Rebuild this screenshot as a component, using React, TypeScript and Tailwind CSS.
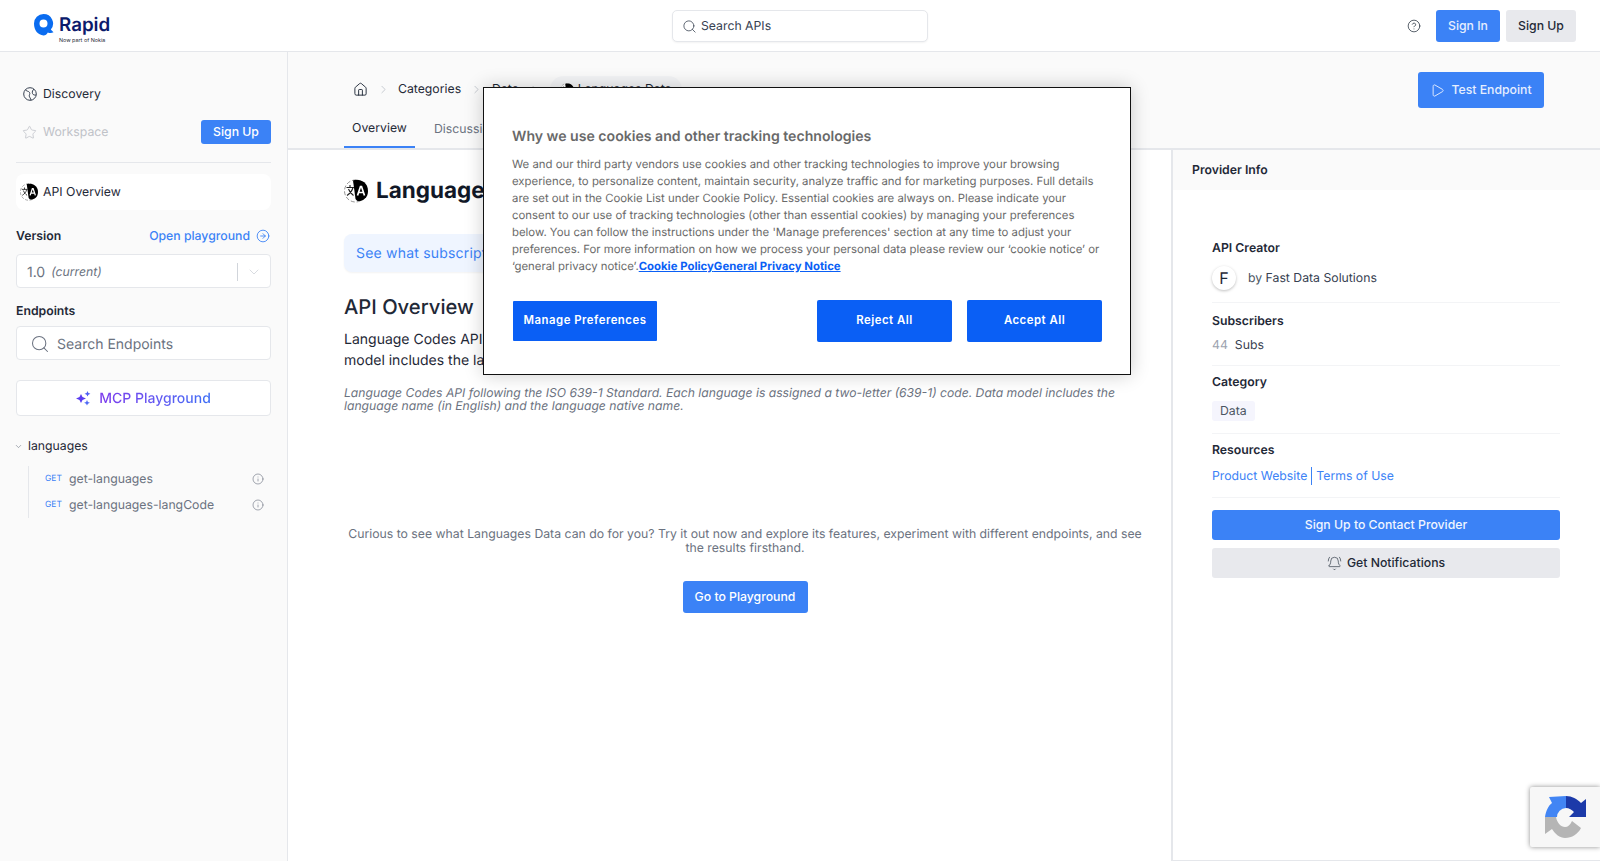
import { BellRing, ChevronDown, ChevronRight, CircleArrowRight, CircleHelp, House, Info, Play, Search, Star } from "lucide-react";
import { FC, ReactNode } from "react";

const LangIcon: FC<{ size: number }> = ({ size }) => (
  <svg width={size} height={size} viewBox="0 0 24 24" className="flex-shrink-0">
    <circle cx="11.500" cy="12" r="11" fill="#fff" stroke="#777" strokeWidth="0.8" strokeDasharray="4 2" />
    <path d="M9 1.500C14 -.5 24 2 24 12c0 8-7 11-11 9.800L11.500 20z" fill="#000" />
    <path d="M13.500 16.500l3-9h1l3 9M14.700 13.500h4.600" stroke="#fff" strokeWidth="1.700" fill="none" />
    <path d="M2.500 8.500h7.500M6 6v2.500M9 8.500c-1 4-3 6-6 8M4.500 10c1 3 3 5 5 6.500" stroke="#222" strokeWidth="1.100" fill="none" />
  </svg>
);

const DiscoveryIcon = () => (
  <svg width="14" height="14" viewBox="0 0 14 14" fill="none" stroke="#374151" strokeWidth="1" className="flex-shrink-0">
    <circle cx="7" cy="7" r="6.300" />
    <path d="M2.500 2.600c.8 2 3 1.200 4 2.800s-.6 2.300-.2 3.800 1.500 2.200 1.700 4.200M11 2c-1.200 1.200-2.200 2.600-1.500 4.500s2.500 1.500 3.700 1.500" />
  </svg>
);

const SparkIcon = () => (
  <svg width="15" height="15" viewBox="0 0 15 15" className="flex-shrink-0">
    <path d="M5 3l1.500 3L10 7.500 6.500 9 5 12 3.500 9 0 7.500 3.500 6z" fill="#5b3df0" />
    <path d="M11.500 0l.9 1.900 2 .9-2 .9-.9 1.900-.9-1.900-2-.9 2-.9z" fill="#4f5ff5" />
    <path d="M11 9l.9 1.900 2 .9-2 .9-.9 1.900-.9-1.900-2-.9 2-.9z" fill="#4f6af5" />
  </svg>
);

const RapidLogo = () => (
  <div className="flex w-[100px] flex-shrink-0 items-start">
    <svg width="20" height="22" viewBox="0 0 20 22" className="mt-[14px] flex-shrink-0">
      <path
        d="M9.500 0a9.500 9.500 0 0 1 7.300 15.600l2.700 2.600c-1.800 1-3.900 1-5.700.2-.9 2-2.700 3.100-4.300 3C4 21 0 16.500 0 9.500A9.500 9.500 0 0 1 9.500 0zm0 5.500a4 4 0 1 0 0 8 4 4 0 0 0 0-8z"
        fill="#0a6cf0"
        fillRule="evenodd"
      />
    </svg>
    <div className="ml-[5px] flex flex-col">
      <span className="mt-[11px] text-[18.750px] font-semibold leading-[28px] text-[#0b1a6b]">Rapid</span>
      <span className="-mt-[1px] text-[5.400px] leading-[7px] text-[#1f2937]">Now part of Nokia</span>
    </div>
  </div>
);

const Section: FC<{ title: string; children: ReactNode; pt: string }> = ({ title, children, pt }) => (
  <div className={`border-b border-[#f3f4f6] ${pt}`}>
    <p className="text-[12.250px] font-semibold leading-[16px] text-[#1f2937]">{title}</p>
    {children}
  </div>
);

const Endpoint: FC<{ name: string }> = ({ name }) => (
  <div className="flex h-[26px] items-center pl-[16px] pr-[7px]">
    <span className="w-[24px] text-[8.500px] text-[#3b82f6]">GET</span>
    <span className="flex-1 text-[12.250px] text-[#6b7280]">{name}</span>
    <Info size={12} strokeWidth={1.25} className="text-[#6b7280]" />
  </div>
);

const Sidebar = () => (
  <aside className="flex w-[288px] flex-shrink-0 flex-col border-r border-[#e5e7eb] bg-[#fafafa] px-[16px] pt-[30px]">
    <div className="flex h-[24px] items-center gap-[6px] pl-[7px] text-[12.250px] text-[#1f2937]">
      <DiscoveryIcon />
      Discovery
    </div>
    <div className="mt-[14px] flex h-[24px] items-center gap-[6px] pl-[6px] text-[12.250px] text-[#bfc2c8]">
      <Star size={15} strokeWidth={1.25} />
      <span className="flex-1">Workspace</span>
      <button type="button" className="h-[24px] w-[70px] rounded-[3px] bg-[#3b82f6] text-[12.250px] font-medium text-white">
        Sign Up
      </button>
    </div>
    <div className="mt-[18px] border-t border-[#e5e7eb]" />
    <div className="mt-[11px] flex h-[36px] items-center gap-[5px] rounded-[8px] bg-white pl-[4px] text-[12.250px] text-[#1f2937]">
      <LangIcon size={18} />
      API Overview
    </div>
    <div className="mt-[17px] flex h-[18px] items-center justify-between">
      <span className="text-[12.250px] font-semibold text-[#1f2937]">Version</span>
      <span className="flex items-center gap-[6px] pr-[1px] text-[12.250px] font-medium text-[#3b82f6]">
        Open playground
        <CircleArrowRight size={14} strokeWidth={1.5} />
      </span>
    </div>
    <div className="mt-[9px] flex h-[34px] items-center rounded-[4px] border border-[#e5e7eb] bg-white pl-[10px] pt-[2px] text-[#6b7280]">
      <span className="text-[14px]">1.0</span>
      <span className="ml-[6px] flex-1 text-[12.250px] italic">(current)</span>
      <span className="h-[18px] border-l border-[#d1d5db]" />
      <ChevronDown size={16} strokeWidth={1.25} className="mx-[8px] text-[#d1d5db]" />
    </div>
    <p className="mt-[14px] text-[12.250px] font-semibold leading-[18px] text-[#1f2937]">Endpoints</p>
    <div className="mt-[6px] flex h-[34px] items-center gap-[7px] rounded-[4px] border border-[#e5e7eb] bg-white pl-[13px] pt-[2px] text-[14px] text-[#6b7280]">
      <Search size={20} strokeWidth={1.25} />
      Search Endpoints
    </div>
    <div className="mt-[20px] flex h-[36px] items-center justify-center gap-[8px] rounded-[4px] border border-[#e5e7eb] bg-white">
      <SparkIcon />
      <span className="bg-gradient-to-r from-[#7c3aed] to-[#3b6ef6] bg-clip-text text-[14px] font-medium text-transparent">
        MCP Playground
      </span>
    </div>
    <div className="-ml-[2px] mt-[21px] flex h-[18px] items-center gap-[5px] text-[12.250px] text-[#1f2937]">
      <ChevronDown size={9} strokeWidth={1.5} className="text-[#6b7280]" />
      languages
    </div>
    <div className="ml-[12px] mt-[11px] border-l border-[#e5e7eb]">
      <Endpoint name="get-languages" />
      <Endpoint name="get-languages-langCode" />
    </div>
  </aside>
);

const PageHead = () => (
  <div className="flex h-[98px] flex-shrink-0 justify-between border-b-2 border-[#e5e7eb] bg-[#fafafa] pl-[56px] pr-[56px]">
    <div className="flex flex-col">
      <div className="mt-[24px] flex h-[28px] items-center pl-[9px] text-[12.250px] text-[#1f2937]">
        <House size={15} strokeWidth={1.5} />
        <ChevronRight size={13} strokeWidth={1} className="mx-[8.500px] text-[#9ca3af]" />
        <span>Categories</span>
        <ChevronRight size={13} strokeWidth={1} className="mx-[9px] text-[#9ca3af]" />
        <span>Data</span>
        <ChevronRight size={13} strokeWidth={1} className="mx-[9px] text-[#9ca3af]" />
        <span className="flex items-center gap-[4px] rounded-full bg-[#f3f4f6] px-[10px] py-[4px]">
          <LangIcon size={14} />
          Languages Data
        </span>
      </div>
      <div className="mt-[8px] flex h-[38px] items-stretch text-[12.250px]">
        <span className="flex w-[71px] items-center justify-center border-b-[2px] border-[#3b82f6] text-[#1f2937]">Overview</span>
        <span className="ml-[19px] flex items-center pb-[1px] text-[#6b7280]">Discussions</span>
      </div>
    </div>
    <button
      type="button"
      className="mt-[20px] flex h-[36px] w-[126px] items-center justify-center gap-[6px] rounded-[3px] bg-[#3b82f6] text-[12.250px] font-medium text-[#e6eefe]"
    >
      <Play size={15} strokeWidth={1.5} />
      Test Endpoint
    </button>
  </div>
);

const Overview = () => (
  <div className="w-[883px] flex-shrink-0 pl-[56px] pr-[25px] pt-[27px]">
    <div className="flex h-[28px] items-center gap-[8px]">
      <LangIcon size={24} />
      <h1 className="text-[22.500px] font-bold text-[#111827]">Languages Data</h1>
    </div>
    <div className="mt-[29px] flex h-[38px] w-fit items-center rounded-[8px] bg-[#eff5ff] px-[12px] text-[14px] tracking-[0.2px] text-[#3b82f6] shadow-[0_1px_2px_rgba(0,0,0,0.05)]">
      See what subscription plans are available for this API
    </div>
    <h2 className="mt-[21px] text-[20.200px] font-medium leading-[28px] text-[#1f2937]">API Overview</h2>
    <p className="mt-[8px] w-[770px] text-[14px] leading-[21px] text-[#1f2937]">
      Language Codes API following the ISO 639-1 Standard. Each language is assigned a two-letter (639-1) code. Data
      model includes the language name (in English) and the language native name.
    </p>
    <p className="mt-[15px] text-[12.170px] italic leading-[13px] text-[#6b7280]">
      Language Codes API following the ISO 639-1 Standard. Each language is assigned a two-letter (639-1) code. Data model includes the
      language name (in English) and the language native name.
    </p>
    <p className="mt-[115px] text-center text-[12.250px] leading-[14px] text-[#6b7280]">
      Curious to see what Languages Data can do for you? Try it out now and explore its features, experiment with different endpoints, and see
      the results firsthand.
    </p>
    <div className="mt-[26px] flex justify-center">
      <button type="button" className="h-[32px] w-[125px] rounded-[3px] bg-[#3b82f6] text-[12.250px] font-medium text-white">
        Go to Playground
      </button>
    </div>
  </div>
);

const ProviderInfo = () => (
  <div className="flex-1 border-b border-l-2 border-[#e5e7eb]">
    <div className="flex h-[40px] items-center bg-[#fafafa] pl-[19px] text-[12.250px] font-semibold text-[#1f2937]">Provider Info</div>
    <div className="pl-[39px] pr-[40px] pt-[50px]">
      <div className="border-b border-[#f3f4f6] pb-[12px]">
        <p className="text-[12.250px] font-semibold leading-[16px] text-[#1f2937]">API Creator</p>
        <div className="mt-[10px] flex items-center gap-[12px] text-[12.250px]">
          <span className="flex h-[24px] w-[24px] items-center justify-center rounded-full bg-white text-[16px] text-[#1f2937] shadow-[0_1px_3px_rgba(0,0,0,0.25)]">
            F
          </span>
          <span className="text-[#4b5563]">
            by <span className="text-[#374151]">Fast Data Solutions</span>
          </span>
        </div>
      </div>
      <Section title="Subscribers" pt="pt-[10px]">
        <p className="mt-[7px] pb-[11px] text-[12.250px] leading-[18px] text-[#374151]">
          <span className="mr-[7px] text-[#9ca3af]">44</span>Subs
        </p>
      </Section>
      <Section title="Category" pt="pt-[8px]">
        <div className="mt-[7px] pb-[12px]">
          <span className="inline-flex h-[20px] items-center rounded-[3px] bg-[#f5f5fd] px-[8px] text-[12.250px] text-[#4b5563]">Data</span>
        </div>
      </Section>
      <Section title="Resources" pt="pt-[8px]">
        <div className="mt-[10px] flex h-[16px] items-center text-[12.250px] text-[#3b82f6]">
          <span className="border-r border-[#3b82f6] pr-[4px]">Product Website</span>
          <span className="pl-[4px]">Terms of Use</span>
        </div>
        <div className="h-[13px]" />
      </Section>
      <button type="button" className="mt-[12px] h-[30px] w-full rounded-[3px] bg-[#3b82f6] text-[12.250px] font-medium text-[#f0f5ff]">
        Sign Up to Contact Provider
      </button>
      <button
        type="button"
        className="mt-[8px] flex h-[30px] w-full items-center justify-center gap-[5px] rounded-[3px] bg-[#e8e9ed] text-[12.250px] font-medium text-[#1f2937]"
      >
        <BellRing size={15} strokeWidth={1} />
        Get Notifications
      </button>
    </div>
  </div>
);

const CookieDialog = () => (
  <div className="absolute left-[483px] top-[87px] h-[288px] w-[648px] border border-[#111] bg-white pl-[28px] pr-[28px] pt-[39px] shadow-[0_0_18px_rgba(0,0,0,0.2)]">
    <h2 className="text-[14.100px] font-semibold leading-[20px] text-[#696969]">Why we use cookies and other tracking technologies</h2>
    <p className="mt-[9px] text-[11.375px] leading-[17px] text-[#696969]">
      We and our third party vendors use cookies and other tracking technologies to improve your browsing experience, to personalize
      content, maintain security, analyze traffic and for marketing purposes. Full details are set out in the Cookie List under Cookie
      Policy. Essential cookies are always on. Please indicate your consent to our use of tracking technologies (other than essential
      cookies) by managing your preferences below. You can follow the instructions under the 'Manage preferences' section at any time to
      adjust your preferences. For more information on how we process your personal data please review our ‘cookie notice’ or ‘general
      privacy notice’.
      <a className="font-bold text-[#0a5ff5] underline">Cookie Policy</a>
      <a className="font-bold text-[#0a5ff5] underline">General Privacy Notice</a>
    </p>
    <div className="mt-[25px] flex items-center">
      <button type="button" className="ml-[1px] h-[40px] w-[144px] rounded-[1px] bg-[#0a5ff5] text-[11.375px] font-semibold tracking-[0.5px] text-white">
        Manage Preferences
      </button>
      <button type="button" className="ml-auto h-[42px] w-[135px] rounded-[2px] bg-[#0a5ff5] text-[11.375px] font-semibold tracking-[0.5px] text-white">
        Reject All
      </button>
      <button type="button" className="ml-[15px] h-[42px] w-[135px] rounded-[2px] bg-[#0a5ff5] text-[11.375px] font-semibold tracking-[0.5px] text-white">
        Accept All
      </button>
    </div>
  </div>
);

const Recaptcha = () => (
  <div className="absolute left-[1530px] top-[787px] flex h-[60px] w-[70px] items-center rounded-l-[2px] bg-[#f7f7f7] pl-[15px] shadow-[0_0_5px_rgba(0,0,0,0.45)]">
    <svg width="42" height="42" viewBox="0 0 42 42">
      <path d="M21 0C27 0 32 3 36 7L41 3V21H24L29 16C27 14 24 12 21 12Z" fill="#1c3aa9" />
      <path d="M0 21C1 15 3 10 7 7L4 1L21 0V12A9 9 0 0 0 12 21Z" fill="#4285f4" />
      <path d="M0 21H11C12 27 16 31 20 31C23 31 25 29 27 25L36 32C33 38 27 42 20 42C15 42 10 38 7 33L0 38Z" fill="#b5b5b5" />
    </svg>
  </div>
);

export default function App() {
  return (
    <div className="relative flex h-[861px] w-full flex-col overflow-hidden bg-white font-['Inter',sans-serif] [text-rendering:geometricPrecision]">
      <header className="flex h-[52px] flex-shrink-0 items-start border-b border-[#e5e7eb] bg-white pl-[34px] pr-[24px]">
        <RapidLogo />
        <div className="ml-[538px] mt-[10px] flex h-[32px] w-[256px] items-center gap-[4px] rounded-[5px] border border-[#e5e7eb] bg-white pl-[9px] pt-[1px] text-[12.250px] text-[#374151] shadow-[0_1px_2px_rgba(0,0,0,0.05)]">
          <Search size={15} strokeWidth={1.25} />
          Search APIs
        </div>
        <div className="ml-auto mt-[10px] flex items-center">
          <CircleHelp size={14} strokeWidth={1.25} className="mr-[15px] text-[#1f2937]" />
          <button type="button" className="h-[32px] w-[64px] rounded-[3px] bg-[#3b82f6] text-[12.250px] font-medium text-[#e6eefe]">
            Sign In
          </button>
          <button type="button" className="ml-[6px] h-[32px] w-[70px] rounded-[3px] bg-[#e8e9ed] text-[12.250px] font-medium text-[#1f2937]">
            Sign Up
          </button>
        </div>
      </header>
      <div className="flex min-h-0 flex-1">
        <Sidebar />
        <main className="flex min-w-0 flex-1 flex-col">
          <PageHead />
          <div className="flex flex-1">
            <Overview />
            <ProviderInfo />
          </div>
        </main>
      </div>
      <CookieDialog />
      <Recaptcha />
    </div>
  );
}
